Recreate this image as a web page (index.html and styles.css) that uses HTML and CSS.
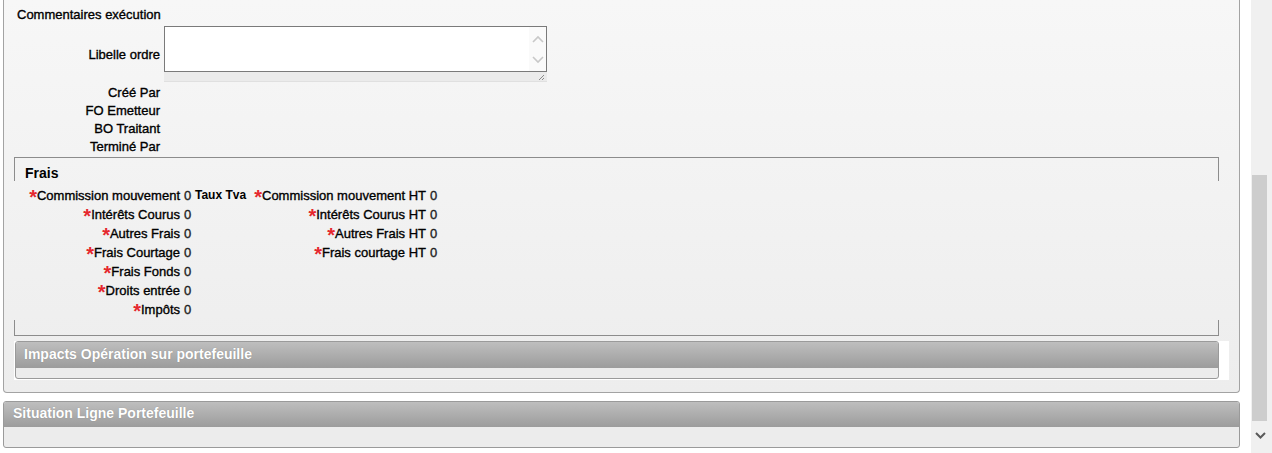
FILE: index.html
```html
<!DOCTYPE html>
<html lang="fr">
<head>
  <meta charset="UTF-8">
  <title>Ordre - Commentaires et frais</title>
  <link rel="stylesheet" href="styles.css">
</head>
<body>
  <div class="page">
    <div class="main-panel">
      <div class="section-title">Commentaires exécution</div>

      <div class="form-row">
        <label class="form-label" for="libelle">Libelle ordre</label>
        <div class="memo">
          <div class="memo-box">
            <textarea id="libelle" class="memo-input"></textarea>
            <div class="memo-scroll">
              <svg width="12" height="8" viewBox="0 0 12 8"><path d="M1 7 L6 2 L11 7" fill="none" stroke="#c8c8c8" stroke-width="1.6"/></svg>
              <svg width="12" height="8" viewBox="0 0 12 8"><path d="M1 1 L6 6 L11 1" fill="none" stroke="#c8c8c8" stroke-width="1.6"/></svg>
            </div>
          </div>
          <div class="memo-resize">
            <svg width="7" height="7" viewBox="0 0 7 7"><path d="M6 1 L1 6 M6 4 L4 6" stroke="#8a8a8a" stroke-width="1"/></svg>
          </div>
        </div>
      </div>

      <div class="info-rows">
        <div class="info-row"><span class="form-label">Créé Par</span><span></span></div>
        <div class="info-row"><span class="form-label">FO Emetteur</span><span></span></div>
        <div class="info-row"><span class="form-label">BO Traitant</span><span></span></div>
        <div class="info-row"><span class="form-label">Terminé Par</span><span></span></div>
      </div>

      <div class="fees">
        <div class="fees-head">Frais</div>
        <div class="fees-body">
          <div class="fees-row">
            <span class="fee-label"><span class="req">*</span>Commission mouvement</span>
            <span class="fee-value">0</span>
            <span class="fee-tva">Taux Tva</span>
            <span class="fee-label"><span class="req">*</span>Commission mouvement HT</span>
            <span class="fee-value">0</span>
          </div>
          <div class="fees-row">
            <span class="fee-label"><span class="req">*</span>Intérêts Courus</span>
            <span class="fee-value">0</span>
            <span></span>
            <span class="fee-label"><span class="req">*</span>Intérêts Courus HT</span>
            <span class="fee-value">0</span>
          </div>
          <div class="fees-row">
            <span class="fee-label"><span class="req">*</span>Autres Frais</span>
            <span class="fee-value">0</span>
            <span></span>
            <span class="fee-label"><span class="req">*</span>Autres Frais HT</span>
            <span class="fee-value">0</span>
          </div>
          <div class="fees-row">
            <span class="fee-label"><span class="req">*</span>Frais Courtage</span>
            <span class="fee-value">0</span>
            <span></span>
            <span class="fee-label"><span class="req">*</span>Frais courtage HT</span>
            <span class="fee-value">0</span>
          </div>
          <div class="fees-row">
            <span class="fee-label"><span class="req">*</span>Frais Fonds</span>
            <span class="fee-value">0</span>
          </div>
          <div class="fees-row">
            <span class="fee-label"><span class="req">*</span>Droits entrée</span>
            <span class="fee-value">0</span>
          </div>
          <div class="fees-row">
            <span class="fee-label"><span class="req">*</span>Impôts</span>
            <span class="fee-value">0</span>
          </div>
        </div>
        <div class="fees-foot"></div>
      </div>

      <div class="impacts-wrap">
        <div class="box">
          <div class="box-head">Impacts Opération sur portefeuille</div>
          <div class="box-body box-body-small"></div>
        </div>
      </div>
    </div>

    <div class="box situation">
      <div class="box-head">Situation Ligne Portefeuille</div>
      <div class="box-body"></div>
    </div>
  </div>

  <div class="scrollbar">
    <div class="scroll-thumb"></div>
    <div class="scroll-arrow">
      <svg width="11" height="7" viewBox="0 0 11 7"><path d="M1 1 L5.5 5.5 L10 1" fill="none" stroke="#5a5a5a" stroke-width="2"/></svg>
    </div>
  </div>
</body>
</html>
```

FILE: styles.css
```css
body {
  margin: 0;
  height: 453px;
  overflow: hidden;
  display: flex;
  background: #fff;
  font-family: "Liberation Sans", Arial, sans-serif;
  font-size: 13px;
  color: #000;
  -webkit-text-stroke: 0.35px currentColor;
}
.page {
  flex: 1;
  padding: 0 11px 0 3px;
}
.main-panel {
  border: 1px solid #a3a3a3;
  border-top: 0;
  border-radius: 0 0 4px 4px;
  background: linear-gradient(to bottom, #f7f7f7, #ededed);
  padding-bottom: 12px;
}
.section-title {
  padding: 6px 0 0 13px;
  line-height: 18px;
}
.form-row {
  display: grid;
  grid-template-columns: 156px 383px;
  column-gap: 4px;
  align-items: center;
  margin-top: 2px;
}
.form-label {
  text-align: right;
}
.memo-box {
  display: flex;
  height: 44px;
  border: 1px solid #7a7a7a;
  background: #fff;
}
.memo-input {
  flex: 1;
  border: 0;
  margin: 0;
  padding: 2px;
  resize: none;
  outline: none;
  font: inherit;
}
.memo-scroll {
  width: 17px;
  background: #fafafa;
  display: flex;
  flex-direction: column;
  justify-content: space-between;
  align-items: center;
  padding: 8px 0 7px;
}
.memo-resize {
  height: 9px;
  background: #ebebeb;
  border-bottom: 1px solid #e0e0e0;
  display: flex;
  justify-content: flex-end;
  align-items: flex-end;
  padding-right: 2px;
}
.memo-resize svg {
  display: block;
}
.info-rows {
  margin-top: 2px;
}
.info-row {
  display: grid;
  grid-template-columns: 156px auto;
  column-gap: 4px;
  line-height: 18px;
}
.fees {
  margin: 1px 20px 0 10px;
}
.fees-head {
  border: 1px solid #8c8c8c;
  border-bottom: 0;
  padding: 7px 0 0 10px;
  line-height: 16px;
  font-size: 14px;
  font-weight: bold;
  -webkit-text-stroke: 0;
}
.fees-body {
  padding: 5px 0 1px;
}
.fees-row {
  display: grid;
  grid-template-columns: 170px 11px 52px 183px auto;
  height: 19px;
  line-height: 19px;
}
.fee-label {
  text-align: right;
  padding-right: 4px;
  white-space: nowrap;
}
.fee-value {
  color: #222;
}
.fee-tva {
  font-size: 12px;
  font-weight: bold;
  -webkit-text-stroke: 0;
}
.req {
  color: #e5272d;
  -webkit-text-stroke: 0;
  font-size: 20px;
  font-weight: bold;
  vertical-align: -4px;
  line-height: 0;
}
.fees-foot {
  height: 15px;
  border: 1px solid #8c8c8c;
  border-top: 0;
}
.impacts-wrap {
  margin: 5px 10px 0 10px;
  padding: 0 10px 1px 1px;
  background: #fff;
}
.box {
  border: 1px solid #9a9a9a;
  border-radius: 3px;
  overflow: hidden;
  background: #ececec;
}
.box-head {
  height: 26px;
  line-height: 25px;
  padding-left: 8px;
  background: linear-gradient(to bottom, #bebebe, #9c9c9c);
  color: #fff;
  -webkit-text-stroke: 0;
  font-size: 14px;
  font-weight: bold;
  text-shadow: 0 0 1px rgba(0, 0, 0, 0.25);
}
.box-body {
  height: 20px;
}
.box-body-small {
  height: 10px;
}
.situation {
  margin-top: 8px;
}
.situation .box-head {
  height: 25px;
  line-height: 23px;
  padding-left: 9px;
}
.scrollbar {
  width: 21px;
  background: #f0f0f0;
  display: flex;
  flex-direction: column;
  -webkit-text-stroke: 0;
}
.scroll-thumb {
  margin: 175px 5px 0 1px;
  height: 246px;
  background: #cdcdcd;
}
.scroll-arrow {
  display: flex;
  justify-content: center;
  padding: 11px 2px 0 0;
}
.scroll-arrow svg {
  display: block;
}
```
